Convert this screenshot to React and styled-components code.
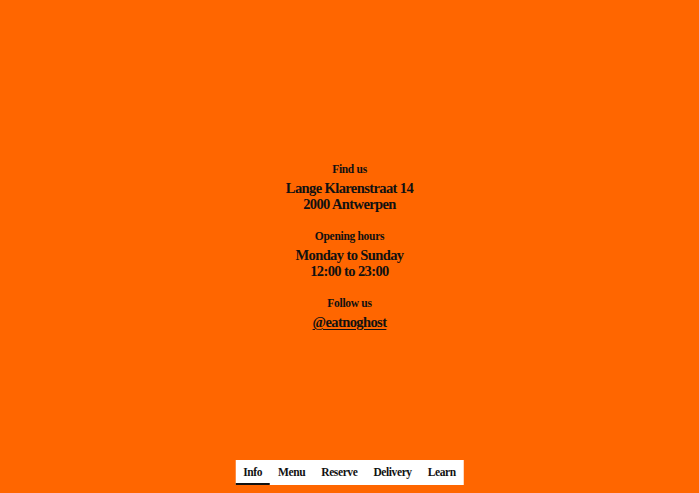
import React from "react";
import styled, { createGlobalStyle } from "styled-components";

const Global = createGlobalStyle`
  html, body { margin: 0; padding: 0; height: 100%; }
  body { background: #ff6600; font-family: "Liberation Serif", "Times New Roman", serif; color: #111; }
  #root { height: 100%; }
`;

const Page = styled.div`
  height: 100vh;
  display: flex;
  flex-direction: column;
  align-items: center;
  justify-content: center;
  position: relative;
`;

const Info = styled.main`
  display: flex;
  flex-direction: column;
  align-items: center;
  gap: 16px;
  text-align: center;
  margin-top: -3px;
`;

const Block = styled.section`
  display: flex;
  flex-direction: column;
  align-items: center;
  gap: 3px;
`;

const Label = styled.div`
  font-size: 11.5px;
  font-weight: 700;
  line-height: 16px;
  letter-spacing: -0.3px;
`;

const Value = styled.div`
  font-size: 14.5px;
  font-weight: 700;
  line-height: 16px;
  letter-spacing: -0.6px;
`;

const Link = styled.a`
  font-size: 14.5px;
  font-weight: 700;
  line-height: 16px;
  letter-spacing: -0.6px;
  color: inherit;
  text-decoration: underline;
  text-decoration-thickness: 1px;
  text-underline-offset: 2px;
`;

const Nav = styled.nav`
  position: absolute;
  bottom: 8px;
  left: 50%;
  transform: translateX(-50%);
  background: #fff;
  display: flex;
  height: 25px;
`;

const NavItem = styled.a`
  font-size: 11.5px;
  font-weight: 700;
  letter-spacing: -0.4px;
  padding: 0 8px;
  display: flex;
  align-items: center;
  color: #111;
  text-decoration: none;
  border-bottom: 2px solid ${(p) => (p.$active ? "#111" : "transparent")};
  box-sizing: border-box;
`;

export default function App() {
  const items = ["Info", "Menu", "Reserve", "Delivery", "Learn"];
  return (
    <>
      <Global />
      <Page>
        <Info>
          <Block>
            <Label>Find us</Label>
            <Value>Lange Klarenstraat 14<br />2000 Antwerpen</Value>
          </Block>
          <Block>
            <Label>Opening hours</Label>
            <Value>Monday to Sunday<br />12:00 to 23:00</Value>
          </Block>
          <Block>
            <Label>Follow us</Label>
            <Link href="#">@eatnoghost</Link>
          </Block>
        </Info>
        <Nav>
          {items.map((t, i) => (
            <NavItem key={t} $active={i === 0} href="#">{t}</NavItem>
          ))}
        </Nav>
      </Page>
    </>
  );
}
